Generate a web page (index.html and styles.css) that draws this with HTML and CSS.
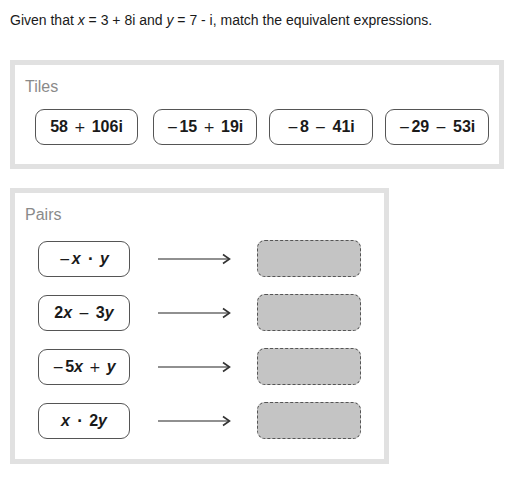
FILE: index.html
```html
<!DOCTYPE html>
<html>
<head>
<meta charset="utf-8">
<link rel="stylesheet" href="styles.css">
</head>
<body>
<p class="question">Given that <i>x</i> = 3 + 8i and <i>y</i> = 7 - i, match the equivalent expressions.</p>

<section class="panel tiles">
  <div class="panel-title">Tiles</div>
  <div class="tile-row">
    <div class="chip tile"><span>58</span><span class="op">+</span><span>106i</span></div>
    <div class="chip tile"><span class="op neg">−</span><span>15</span><span class="op">+</span><span>19i</span></div>
    <div class="chip tile"><span class="op neg">−</span><span>8</span><span class="op">−</span><span>41i</span></div>
    <div class="chip tile"><span class="op neg">−</span><span>29</span><span class="op">−</span><span>53i</span></div>
  </div>
</section>

<section class="panel pairs">
  <div class="panel-title">Pairs</div>
  <div class="pair-list">
    <div class="pair">
      <div class="chip expr"><span class="op neg">−</span><i>x</i><span class="op dot">·</span><i>y</i></div>
      <svg class="arrow" width="74" height="12" viewBox="0 0 74 12"><line x1="0" y1="6" x2="71" y2="6"/><polyline points="65,1.5 71.5,6 65,10.5"/></svg>
      <div class="drop"></div>
    </div>
    <div class="pair">
      <div class="chip expr"><span>2</span><i>x</i><span class="op">−</span><span>3</span><i>y</i></div>
      <svg class="arrow" width="74" height="12" viewBox="0 0 74 12"><line x1="0" y1="6" x2="71" y2="6"/><polyline points="65,1.5 71.5,6 65,10.5"/></svg>
      <div class="drop"></div>
    </div>
    <div class="pair">
      <div class="chip expr"><span class="op neg">−</span><span>5</span><i>x</i><span class="op">+</span><i>y</i></div>
      <svg class="arrow" width="74" height="12" viewBox="0 0 74 12"><line x1="0" y1="6" x2="71" y2="6"/><polyline points="65,1.5 71.5,6 65,10.5"/></svg>
      <div class="drop"></div>
    </div>
    <div class="pair">
      <div class="chip expr"><i>x</i><span class="op dot">·</span><span>2</span><i>y</i></div>
      <svg class="arrow" width="74" height="12" viewBox="0 0 74 12"><line x1="0" y1="6" x2="71" y2="6"/><polyline points="65,1.5 71.5,6 65,10.5"/></svg>
      <div class="drop"></div>
    </div>
  </div>
</section>
</body>
</html>
```

FILE: styles.css
```css
html, body {
  margin: 0;
  padding: 0;
  background: #fff;
}

body {
  padding: 12px 10px 0 10px;
  font-family: "Liberation Sans", Arial, sans-serif;
  color: #1a1a1a;
}

.question {
  margin: 0;
  font-size: 14px;
  line-height: 16px;
}

.panel {
  border: 5px solid #e1e1e1;
  box-sizing: border-box;
}

.panel-title {
  font-size: 16px;
  line-height: 18px;
  color: #8a8a8a;
}

.tiles {
  margin-top: 32px;
  width: 494px;
  padding: 13px 10px 19px 10px;
}

.tile-row {
  display: flex;
  gap: 12px;
  margin-top: 13px;
  padding-left: 10px;
}

.chip {
  box-sizing: border-box;
  height: 36px;
  border: 1px solid #555;
  border-radius: 9px;
  display: flex;
  align-items: center;
  justify-content: center;
  font-size: 16px;
  font-weight: 700;
  color: #1a1a1a;
  background: #fff;
}

.tile {
  width: 104px;
}

.tile:first-child {
  width: 103px;
  margin-right: 3px;
}

.op {
  font-family: "DejaVu Sans", sans-serif;
  font-weight: 400;
  font-size: 14px;
  margin: 0 6px;
}

.op.neg {
  margin: 0 1px 0 0;
}

.op.dot {
  font-weight: 700;
  margin: 0 7px;
}

.chip i {
  font-style: italic;
  font-weight: 700;
}

.pairs {
  margin-top: 19px;
  width: 379px;
  height: 276px;
  padding: 13px 10px 0 10px;
}

.pair-list {
  display: flex;
  flex-direction: column;
  gap: 17px;
  margin-top: 16px;
  padding-left: 13px;
}

.pair {
  display: flex;
  align-items: center;
}

.expr {
  width: 92px;
  height: 36px;
}

.arrow {
  margin-left: 28px;
  display: block;
}

.arrow line {
  stroke: #222;
  stroke-width: 1.2;
}

.arrow polyline {
  fill: none;
  stroke: #333;
  stroke-width: 1.6;
}

.drop {
  margin-left: 25px;
  box-sizing: border-box;
  width: 104px;
  height: 37px;
  background: #c4c4c4;
  border: 1px dashed #555;
  border-radius: 8px;
}
```
